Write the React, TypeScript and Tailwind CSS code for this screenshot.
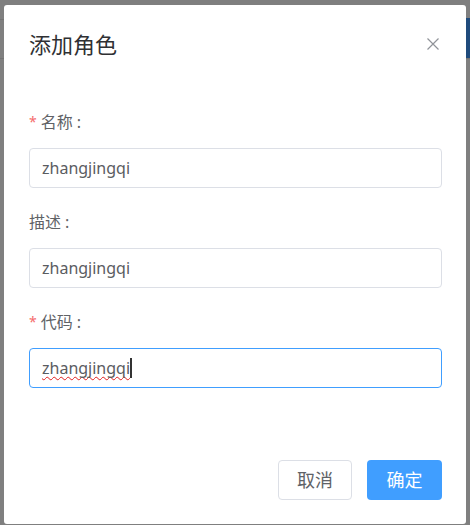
import React from "react";

const font = { fontFamily: '"Noto Sans", "Noto Sans CJK SC", sans-serif' };

function Label({ text, required }: { text: string; required?: boolean }) {
  return (
    <div className="h-[28px] mb-[12px] flex items-center text-[16px] leading-[28px] text-[#606266]">
      {required && <span className="text-[#f56c6c] mr-[4px] text-[14px] leading-[28px]">*</span>}
      <span>{text}</span>
      <span className="ml-[4px]">:</span>
    </div>
  );
}

function Field({ label, value, required, focused }: { label: string; value: string; required?: boolean; focused?: boolean }) {
  return (
    <div className="mb-[20px]">
      <Label text={label} required={required} />
      <div
        className={
          "h-[40px] rounded-[4px] border bg-white flex items-center pl-[12px] text-[16px] text-[#5a5c61] " +
          (focused ? "border-[#409eff]" : "border-[#dcdfe6]")
        }
      >
        {focused ? (
          <>
            <span className="underline decoration-wavy decoration-[#e02020] decoration-[1px] underline-offset-[2px] [text-decoration-skip-ink:none]">
              {value}
            </span>
            <span className="w-[2px] h-[20px] bg-[#333]" />
          </>
        ) : (
          <span>{value}</span>
        )}
      </div>
    </div>
  );
}

export default function App() {
  return (
    <div className="relative w-[470px] h-[525px] bg-[#7f7f7f] overflow-hidden" style={font}>
      <div className="absolute left-0 top-[19px] w-full h-px bg-[#747474]" />
      <div className="absolute left-0 top-[58px] w-full h-px bg-[#747474]" />
      <div className="absolute right-0 top-[18px] w-[6px] h-[40px] bg-[#1f4b7c]" />
      <div className="relative pt-[5px] pl-[4px]">
        <div className="w-[462px] h-[519px] bg-white rounded-[3px] flex flex-col">
          <div className="flex items-center justify-between pt-[24px] pl-[25px] pr-[25px]">
            <span className="text-[22px] leading-[30px] text-[#2f3033]">添加角色</span>
            <span className="w-[16px] h-[16px] flex items-center justify-center">
              <svg width="12" height="12" viewBox="0 0 12 12">
                <path d="M0.5 0.5 L11.5 11.5 M11.5 0.5 L0.5 11.5" stroke="#909399" strokeWidth="1.2" fill="none" />
              </svg>
            </span>
          </div>
          <div className="pt-[49px] pl-[25px] pr-[24px]">
            <Field label="名称" value="zhangjingqi" required />
            <Field label="描述" value="zhangjingqi" />
            <Field label="代码" value="zhangjingqi" required focused />
          </div>
          <div className="flex justify-end gap-[15px] pt-[52px] pr-[24px]">
            <button className="w-[74px] h-[40px] rounded-[4px] border border-[#dcdfe6] bg-white text-[18px] text-[#606266]">取消</button>
            <button className="w-[75px] h-[40px] rounded-[4px] bg-[#409eff] text-[18px] text-white">确定</button>
          </div>
        </div>
      </div>
    </div>
  );
}
